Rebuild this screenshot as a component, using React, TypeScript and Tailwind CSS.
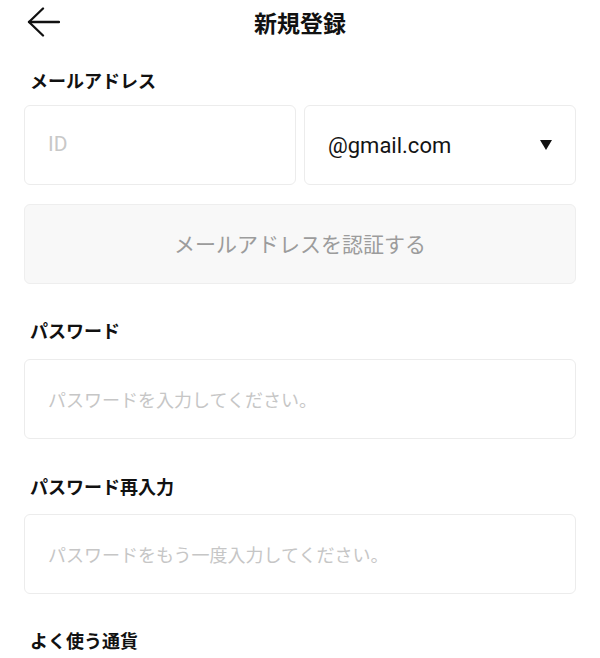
import React from "react";

const jp = { fontFamily: '"Noto Sans CJK JP", "Noto Sans", sans-serif' };
const latin = { fontFamily: 'Roboto, "Noto Sans CJK JP", sans-serif' };

function Label({ children, className = "" }: { children: React.ReactNode; className?: string }) {
  return (
    <div className={`pl-[6px] text-[18px] font-bold leading-[24px] text-[#111] ${className}`}>{children}</div>
  );
}

export default function App() {
  return (
    <div className="w-[600px] h-[658px] overflow-hidden bg-white" style={jp}>
      <div className="grid grid-cols-[1fr_auto_1fr] items-center h-[44px] px-[26px]">
        <div className="flex items-center">
          <svg width="34" height="30" viewBox="0 0 34 30" fill="none" stroke="#111" strokeWidth="2.3" strokeLinecap="round" strokeLinejoin="round">
            <path d="M3 15 H33" />
            <path d="M17 1.5 L3 15 L17 28.5" />
          </svg>
        </div>
        <div className="text-[23px] font-bold text-[#111] leading-[28px]">新規登録</div>
        <div />
      </div>

      <div className="px-6">
        <Label className="mt-[24px]">メールアドレス</Label>
        <div className="mt-[13px] grid grid-cols-2 gap-2">
          <div className="h-[80px] rounded-[6px] border border-[#ececec] flex items-center pl-[23px]">
            <span className="text-[21px] text-[#c8c8c8]" style={latin}>ID</span>
          </div>
          <div className="h-[80px] rounded-[6px] border border-[#ececec] flex items-center justify-between pl-[23px] pr-[23px]">
            <span className="text-[22px] text-[#141414]" style={latin}>@gmail.com</span>
            <svg width="12" height="10" viewBox="0 0 12 10">
              <polygon points="0,0 12,0 6,10" fill="#111" />
            </svg>
          </div>
        </div>
        <div className="mt-[19px] h-[80px] rounded-[6px] border border-[#eeeeee] bg-[#f8f8f8] flex items-center justify-center">
          <span className="text-[21px] text-[#9c9c9c]">メールアドレスを認証する</span>
        </div>

        <Label className="mt-[34px]">パスワード</Label>
        <div className="mt-[17px] h-[80px] rounded-[6px] border border-[#ececec] flex items-center pl-[23px]">
          <span className="text-[18px] text-[#c6c6c6]">パスワードを入力してください。</span>
        </div>

        <Label className="mt-[35px]">パスワード再入力</Label>
        <div className="mt-[16px] h-[80px] rounded-[6px] border border-[#ececec] flex items-center pl-[23px]">
          <span className="text-[18px] text-[#c6c6c6]">パスワードをもう一度入力してください。</span>
        </div>

        <Label className="mt-[34px]">よく使う通貨</Label>
      </div>
    </div>
  );
}
